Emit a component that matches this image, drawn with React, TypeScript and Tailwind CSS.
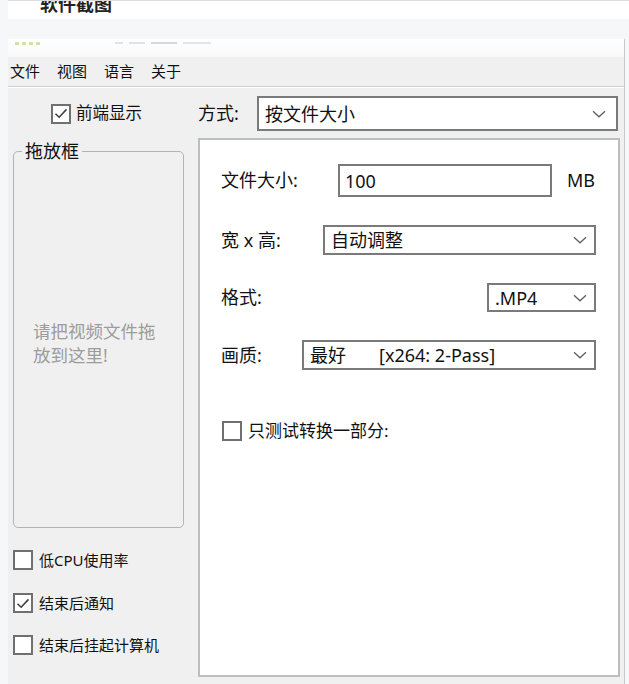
import React from 'react';

const font = { fontFamily: '"Noto Sans", "Noto Sans CJK SC", sans-serif' };

function Chevron() {
  return (
    <svg width="14" height="8" viewBox="0 0 14 8" className="shrink-0">
      <path d="M1 1.2 L7 6.8 L13 1.2" fill="none" stroke="#606060" strokeWidth="1.3" />
    </svg>
  );
}

function Check({ checked }: { checked?: boolean }) {
  return (
    <div className="w-[20px] h-[20px] border-2 border-[#707070] bg-white flex items-center justify-center shrink-0">
      {checked && (
        <svg width="14" height="11" viewBox="0 0 15 12">
          <path d="M1.5 6.2 L5.5 10 L13.5 1.5" fill="none" stroke="#3c3c3c" strokeWidth="1.6" />
        </svg>
      )}
    </div>
  );
}

function Select({ value, className = '', pr = 'pr-[7px]' }: { value: React.ReactNode; className?: string; pr?: string }) {
  return (
    <div className={`h-full border-2 border-[#7a7a7a] bg-white flex items-center pl-[6px] ${pr} ${className}`}>
      <div className="flex-1 text-[18px] text-[#111] leading-none whitespace-nowrap">{value}</div>
      <Chevron />
    </div>
  );
}

export default function App() {
  return (
    <div className="w-[629px] h-[684px] bg-[#f6f7f9] flex flex-col overflow-hidden" style={font}>
      {/* top caption strip */}
      <div className="h-[19px] ml-[8px] bg-white border-t border-[#dcdcdc] overflow-hidden">
        <div className="pl-[32px] -mt-[6px] text-[18px] font-bold text-[#222] leading-none">软件截图</div>
      </div>
      <div className="h-[20px]" />

      {/* window */}
      <div className="ml-[8px] mr-[4px] flex-1 flex flex-col border-r border-[#c8c8c8]">
        <div className="h-[18px] bg-gradient-to-b from-white to-[#f9f9f9] flex items-start pt-[3px]">
          <div className="flex gap-[3px] ml-[7px]">
            <span className="w-[4px] h-[3px] bg-[#cfe3a8]" />
            <span className="w-[4px] h-[3px] bg-[#cfe3a8]" />
            <span className="w-[4px] h-[3px] bg-[#cfe3a8]" />
            <span className="w-[4px] h-[3px] bg-[#cfe3a8]" />
          </div>
          <div className="flex gap-[6px] ml-[75px]">
            <span className="w-[8px] h-[2px] bg-[#e2e2e2]" />
            <span className="w-[16px] h-[2px] bg-[#e2e2e2]" />
            <span className="w-[26px] h-[2px] bg-[#d8d8d8]" />
            <span className="w-[28px] h-[2px] bg-[#e4e4e4]" />
          </div>
        </div>

        {/* menu */}
        <div className="h-[30px] bg-[#f0f0f0] flex items-center gap-[17px] pl-[2px] text-[15px] text-[#111] border-b border-[#cfcfcf]">
          <span>文件</span>
          <span>视图</span>
          <span>语言</span>
          <span>关于</span>
        </div>

        {/* body */}
        <div className="flex-1 bg-[#f0f0f0] border-t border-white flex pl-[5px]">
          {/* left column */}
          <div className="w-[171px] flex flex-col pt-[8px]">
            <div className="h-[35px] flex items-center pl-[38px] gap-[5px]">
              <Check checked />
              <span className="text-[16.5px] text-[#111]">前端显示</span>
            </div>
            <div className="mt-[20px] h-[377px] border border-[#b4b4b4] rounded-[5px] relative">
              <div className="absolute -top-[12px] left-[8px] bg-[#f0f0f0] px-[3px] text-[18px] leading-[22px] text-[#111]">拖放框</div>
              <div className="pt-[167px] pl-[19px] text-[17.5px] leading-[24px] text-[#9c9c9c]">
                请把视频文件拖<br />放到这里!
              </div>
            </div>
            <div className="mt-[22px] h-[20px] flex items-center gap-[6px]">
              <Check />
              <span className="text-[15px] leading-none text-[#111]">低CPU使用率</span>
            </div>
            <div className="mt-[23px] h-[20px] flex items-center gap-[6px]">
              <Check checked />
              <span className="text-[15px] leading-none text-[#111]">结束后通知</span>
            </div>
            <div className="mt-[22px] h-[20px] flex items-center gap-[6px]">
              <Check />
              <span className="text-[15px] leading-none text-[#111]">结束后挂起计算机</span>
            </div>
          </div>

          {/* right column */}
          <div className="ml-[14px] w-[422px] flex flex-col pt-[8px]">
            <div className="h-[35px] flex items-center">
              <span className="w-[59px] text-[18px] text-[#111]">方式:</span>
              <div className="w-[361px] h-full">
                <Select value="按文件大小" pr="pr-[10px]" />
              </div>
            </div>

            <div className="mt-[7px] h-[539px] bg-white border-2 border-[#b9bebf] pl-[21px] pr-[22px] pt-[24px] text-[18px] text-[#111]">
              <div className="h-[33px] flex items-center">
                <span className="w-[117px]">文件大小:</span>
                <div className="w-[214px] h-full border-2 border-[#7a7a7a] flex items-center pl-[5px] leading-none">100</div>
                <span className="ml-[15px]">MB</span>
              </div>

              <div className="mt-[28px] h-[30px] flex items-center">
                <span className="w-[102px]">宽 x 高:</span>
                <div className="flex-1 h-full">
                  <Select value="自动调整" />
                </div>
              </div>

              <div className="mt-[28px] h-[29px] flex items-center">
                <span>格式:</span>
                <div className="ml-auto w-[109px] h-full">
                  <Select value=".MP4" />
                </div>
              </div>

              <div className="mt-[28px] h-[30px] flex items-center">
                <span className="w-[81px]">画质:</span>
                <div className="flex-1 h-full">
                  <Select
                    value={
                      <span className="flex">
                        <span className="w-[69px]">最好</span>
                        <span>[x264: 2-Pass]</span>
                      </span>
                    }
                  />
                </div>
              </div>

              <div className="mt-[50px] h-[21px] flex items-center gap-[6px] pl-[1px]">
                <Check />
                <span className="text-[17px] leading-none">只测试转换一部分:</span>
              </div>
            </div>
          </div>
        </div>
      </div>
    </div>
  );
}
